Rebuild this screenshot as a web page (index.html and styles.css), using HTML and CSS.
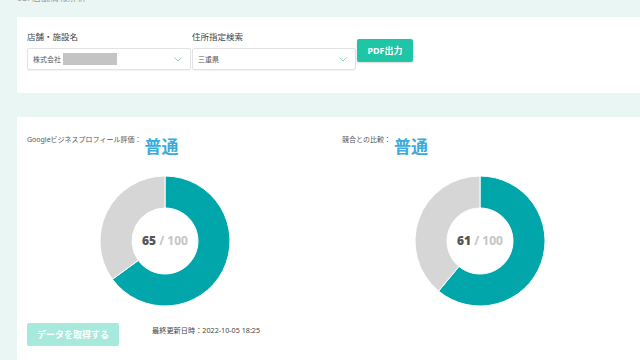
FILE: index.html
```html
<!DOCTYPE html>
<html lang="ja">
<head>
  <meta charset="UTF-8">
  <meta name="viewport" content="width=device-width, initial-scale=1.0">
  <title>店舗情報解析</title>
  <link rel="stylesheet" href="styles.css">
</head>
<body>
  <div class="page">
    <div class="page-title">03. 店舗情報解析</div>

    <!-- 検索条件 -->
    <div class="card search-card">
      <div class="field">
        <label class="field-label">店舗・施設名</label>
        <div class="select">
          <span class="select-text">株式会社</span>
          <span class="masked"></span>
          <svg class="chevron" width="8" height="5" viewBox="0 0 8 5"><path d="M0.5 0.5 L4 4 L7.5 0.5" fill="none" stroke="#7fd9c9" stroke-width="1"/></svg>
        </div>
      </div>
      <div class="field">
        <label class="field-label">住所指定検索</label>
        <div class="select">
          <span class="select-text">三重県</span>
          <svg class="chevron" width="8" height="5" viewBox="0 0 8 5"><path d="M0.5 0.5 L4 4 L7.5 0.5" fill="none" stroke="#7fd9c9" stroke-width="1"/></svg>
        </div>
      </div>
      <button class="pdf-button">PDF出力</button>
    </div>

    <!-- 評価結果 -->
    <div class="card result-card">
      <div class="charts">
        <div class="chart-col">
          <div class="rating">
            <span class="rating-label">Googleビジネスプロフィール評価：</span>
            <span class="rating-value">普通</span>
          </div>
          <div class="donut">
            <svg width="132" height="132" viewBox="-66 -66 132 132">
              <path d="M0,-65 A65,65 0 1,1 -52.59,38.21 L-26.70,19.40 A33,33 0 1,0 0,-33 Z" fill="#00a6aa" stroke="#fff" stroke-width="1"/>
              <path d="M-52.59,38.21 A65,65 0 0,1 0,-65 L0,-33 A33,33 0 0,0 -26.70,19.40 Z" fill="#d6d6d6" stroke="#fff" stroke-width="1"/>
            </svg>
            <div class="donut-score"><b>65</b> / 100</div>
          </div>
        </div>
        <div class="chart-col">
          <div class="rating">
            <span class="rating-label">競合との比較：</span>
            <span class="rating-value">普通</span>
          </div>
          <div class="donut">
            <svg width="132" height="132" viewBox="-66 -66 132 132">
              <path d="M0,-65 A65,65 0 1,1 -41.43,50.08 L-21.03,25.43 A33,33 0 1,0 0,-33 Z" fill="#00a6aa" stroke="#fff" stroke-width="1"/>
              <path d="M-41.43,50.08 A65,65 0 0,1 0,-65 L0,-33 A33,33 0 0,0 -21.03,25.43 Z" fill="#d6d6d6" stroke="#fff" stroke-width="1"/>
            </svg>
            <div class="donut-score"><b>61</b> / 100</div>
          </div>
        </div>
      </div>
      <div class="actions">
        <button class="fetch-button" disabled>データを取得する</button>
        <span class="updated">最終更新日時：2022-10-05 18:25</span>
      </div>
    </div>
  </div>
</body>
</html>
```

FILE: styles.css
```css
/* 基本スタイル */
body {
  margin: 0;
  padding: 0;
  background-color: #e9f6f3;
  font-family: 'Noto Sans', 'Noto Sans CJK JP', sans-serif;
  color: #444;
}

.page {
  padding-left: 17px;
  width: 680px;
  overflow: hidden;
}

.page-title {
  font-size: 9px;
  line-height: 12px;
  height: 12px;
  margin-top: -8px;
  margin-bottom: 13px;
  color: #999;
}

.card {
  background-color: #fff;
  width: 660px;
  box-sizing: border-box;
}

/* 検索条件カード */
.search-card {
  display: flex;
  align-items: center;
  gap: 1px;
  padding: 14px 10px 23px;
}

.field {
  display: flex;
  flex-direction: column;
  width: 164px;
}

.field-label {
  font-size: 8.5px;
  line-height: 11px;
  margin-bottom: 6px;
  color: #444;
}

.select {
  display: flex;
  align-items: center;
  height: 22px;
  box-sizing: border-box;
  border: 1px solid #e2e2e2;
  border-radius: 2px;
  box-shadow: 0 1px 1px rgba(0, 0, 0, 0.05);
  padding: 0 8px 0 5px;
}

.select-text {
  font-size: 7px;
  color: #555;
}

.masked {
  width: 54px;
  height: 12px;
  margin-left: 2px;
  background-color: #c4c4c4;
}

.chevron {
  margin-left: auto;
}

.pdf-button {
  width: 56px;
  height: 23px;
  border: none;
  border-radius: 2px;
  background-color: #1fc6a6;
  color: #fff;
  font-family: inherit;
  font-size: 9px;
  font-weight: bold;
  box-shadow: 0 1px 2px rgba(0, 0, 0, 0.15);
  padding: 0;
}

/* 評価結果カード */
.result-card {
  margin-top: 24px;
  padding: 16px 10px 20px;
}

.charts {
  display: grid;
  grid-template-columns: 276px 276px;
  column-gap: 39px;
}

.chart-col {
  display: flex;
  flex-direction: column;
}

.rating {
  display: flex;
  align-items: flex-start;
  height: 26px;
}

.rating-label {
  font-size: 7px;
  line-height: 12px;
  color: #555;
  margin-top: 1px;
}

.rating-value {
  font-size: 17px;
  font-weight: bold;
  line-height: 22px;
  color: #3aabda;
  margin-top: 3px;
  margin-left: 3px;
}

.donut {
  position: relative;
  align-self: center;
  width: 132px;
  height: 132px;
  margin-top: 16px;
}

.donut svg {
  display: block;
}

.donut-score {
  position: absolute;
  top: 0;
  left: 0;
  width: 100%;
  line-height: 132px;
  text-align: center;
  font-size: 12px;
  font-weight: bold;
  color: #c4c4c4;
}

.donut-score b {
  color: #555;
}

.actions {
  display: flex;
  align-items: flex-start;
  margin-top: 16px;
}

.fetch-button {
  width: 92px;
  height: 23px;
  border: none;
  border-radius: 2px;
  background-color: #a7e9dc;
  color: #fff;
  font-family: inherit;
  font-size: 9px;
  font-weight: bold;
  padding: 0;
}

.updated {
  font-size: 7.2px;
  line-height: 12px;
  margin-left: 33px;
  margin-top: 1px;
  color: #444;
}
```
